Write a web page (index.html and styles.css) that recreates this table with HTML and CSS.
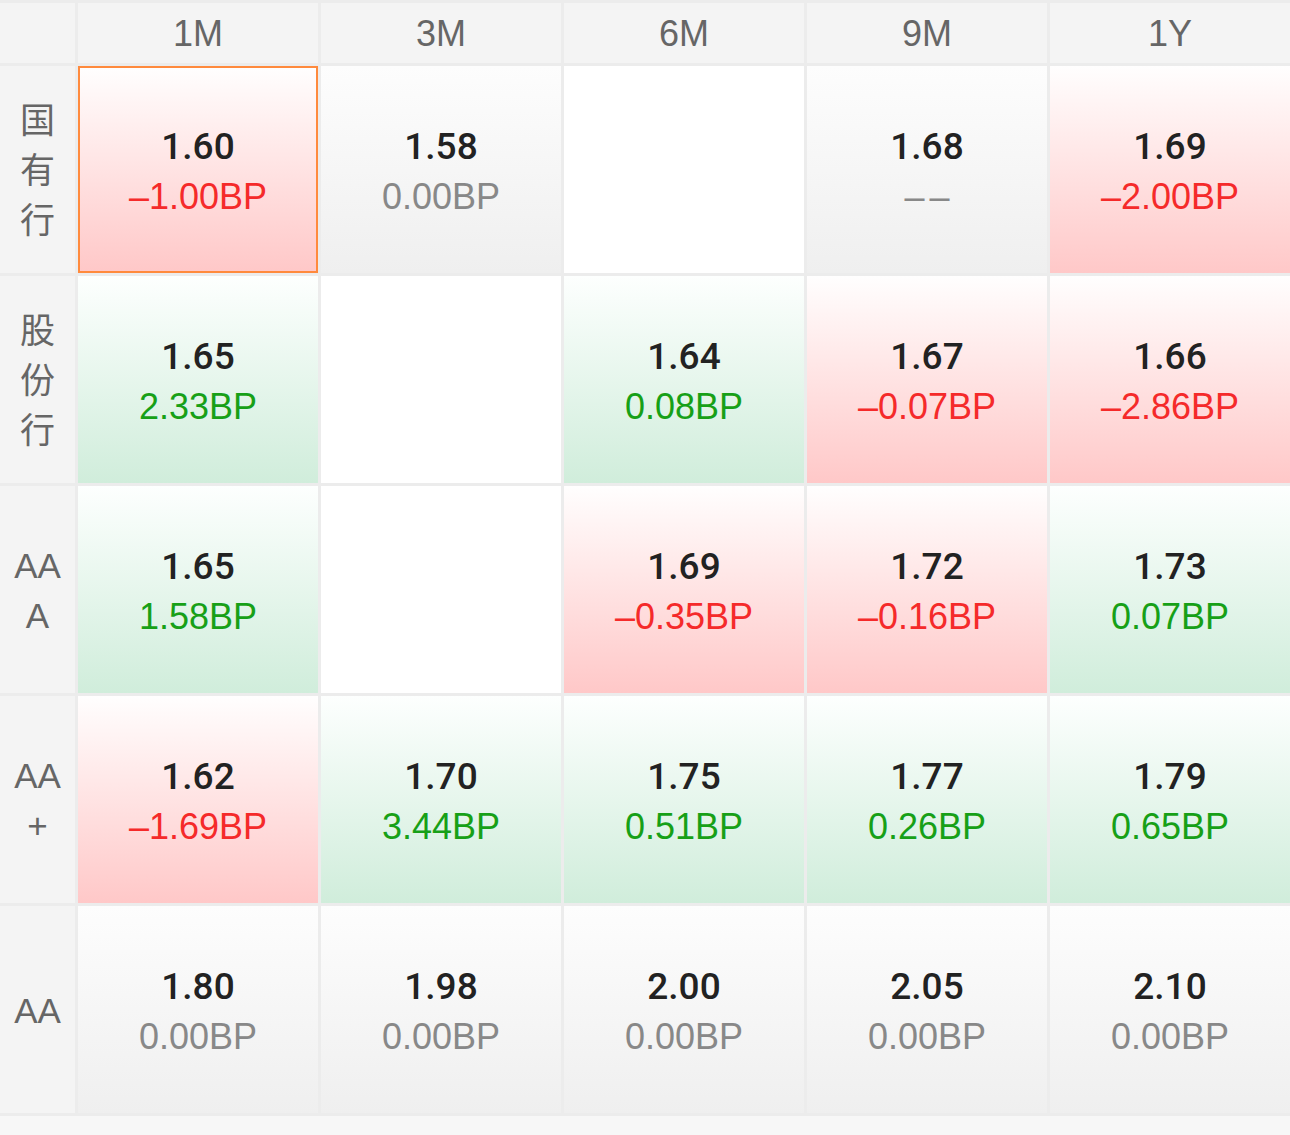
FILE: index.html
```html
<!DOCTYPE html>
<html lang="zh">
<head>
<meta charset="utf-8">
<link rel="stylesheet" href="styles.css">
</head>
<body>
<div class="page">
  <div class="grid">
    <div class="corner"></div>
    <div class="head">1M</div>
    <div class="head">3M</div>
    <div class="head">6M</div>
    <div class="head">9M</div>
    <div class="head">1Y</div>

    <div class="label">国有行</div>
    <div class="cell red selected"><div class="val">1.60</div><div class="chg up">–1.00BP</div></div>
    <div class="cell flat"><div class="val">1.58</div><div class="chg zero">0.00BP</div></div>
    <div class="cell empty"></div>
    <div class="cell flat"><div class="val">1.68</div><div class="chg zero dash">––</div></div>
    <div class="cell red"><div class="val">1.69</div><div class="chg up">–2.00BP</div></div>

    <div class="label">股份行</div>
    <div class="cell green"><div class="val">1.65</div><div class="chg down">2.33BP</div></div>
    <div class="cell empty"></div>
    <div class="cell green"><div class="val">1.64</div><div class="chg down">0.08BP</div></div>
    <div class="cell red"><div class="val">1.67</div><div class="chg up">–0.07BP</div></div>
    <div class="cell red"><div class="val">1.66</div><div class="chg up">–2.86BP</div></div>

    <div class="label">AAA</div>
    <div class="cell green"><div class="val">1.65</div><div class="chg down">1.58BP</div></div>
    <div class="cell empty"></div>
    <div class="cell red"><div class="val">1.69</div><div class="chg up">–0.35BP</div></div>
    <div class="cell red"><div class="val">1.72</div><div class="chg up">–0.16BP</div></div>
    <div class="cell green"><div class="val">1.73</div><div class="chg down">0.07BP</div></div>

    <div class="label">AA+</div>
    <div class="cell red"><div class="val">1.62</div><div class="chg up">–1.69BP</div></div>
    <div class="cell green"><div class="val">1.70</div><div class="chg down">3.44BP</div></div>
    <div class="cell green"><div class="val">1.75</div><div class="chg down">0.51BP</div></div>
    <div class="cell green"><div class="val">1.77</div><div class="chg down">0.26BP</div></div>
    <div class="cell green"><div class="val">1.79</div><div class="chg down">0.65BP</div></div>

    <div class="label">AA</div>
    <div class="cell flat"><div class="val">1.80</div><div class="chg zero">0.00BP</div></div>
    <div class="cell flat"><div class="val">1.98</div><div class="chg zero">0.00BP</div></div>
    <div class="cell flat"><div class="val">2.00</div><div class="chg zero">0.00BP</div></div>
    <div class="cell flat"><div class="val">2.05</div><div class="chg zero">0.00BP</div></div>
    <div class="cell flat"><div class="val">2.10</div><div class="chg zero">0.00BP</div></div>
  </div>
  <div class="footer"></div>
</div>
</body>
</html>
```

FILE: styles.css
```css
html, body {
  margin: 0;
  padding: 0;
  background: #f7f7f7;
}
body {
  font-family: "Liberation Sans", "Noto Sans CJK SC", sans-serif;
  width: 1290px;
  height: 1135px;
  overflow: hidden;
}
.page {
  display: flex;
  flex-direction: column;
  height: 1135px;
}
.grid {
  display: grid;
  grid-template-columns: 75px repeat(5, 240px);
  grid-template-rows: 60px repeat(5, 207px);
  gap: 3px;
  padding: 3px 0;
  background: #ececec;
}
.corner, .head, .label {
  background: #f4f4f4;
  color: #666;
}
.head {
  display: flex;
  align-items: center;
  justify-content: center;
  font-size: 36px;
  padding-top: 2px;
  box-sizing: border-box;
}
.label {
  display: flex;
  align-items: center;
  justify-content: center;
  text-align: center;
  font-size: 35px;
  line-height: 50px;
  padding: 2px 8px 0;
  box-sizing: border-box;
  word-break: break-all;
}
.cell {
  display: flex;
  flex-direction: column;
  align-items: center;
  justify-content: center;
  padding-top: 5px;
  box-sizing: border-box;
  line-height: 50px;
  font-size: 36px;
}
.cell.empty { background: #ffffff; }
.cell.red { background: linear-gradient(#fffefe, #ffc8c8); }
.cell.green { background: linear-gradient(#fdfffe, #d0eddb); }
.cell.flat { background: linear-gradient(#fdfdfd, #efefef); }
.cell.selected { border: 2px solid #ff8a3d; }
.val {
  font-family: Roboto, "Liberation Sans", sans-serif;
  font-weight: 500;
  font-size: 37px;
  color: #222;
}
.chg.up { color: #f52a2a; }
.chg.down { color: #17a017; }
.chg.zero { color: #888; }
.chg.dash { letter-spacing: 5px; margin-right: -5px; }
.footer {
  flex: 1;
  background: #f7f7f7;
}
```
